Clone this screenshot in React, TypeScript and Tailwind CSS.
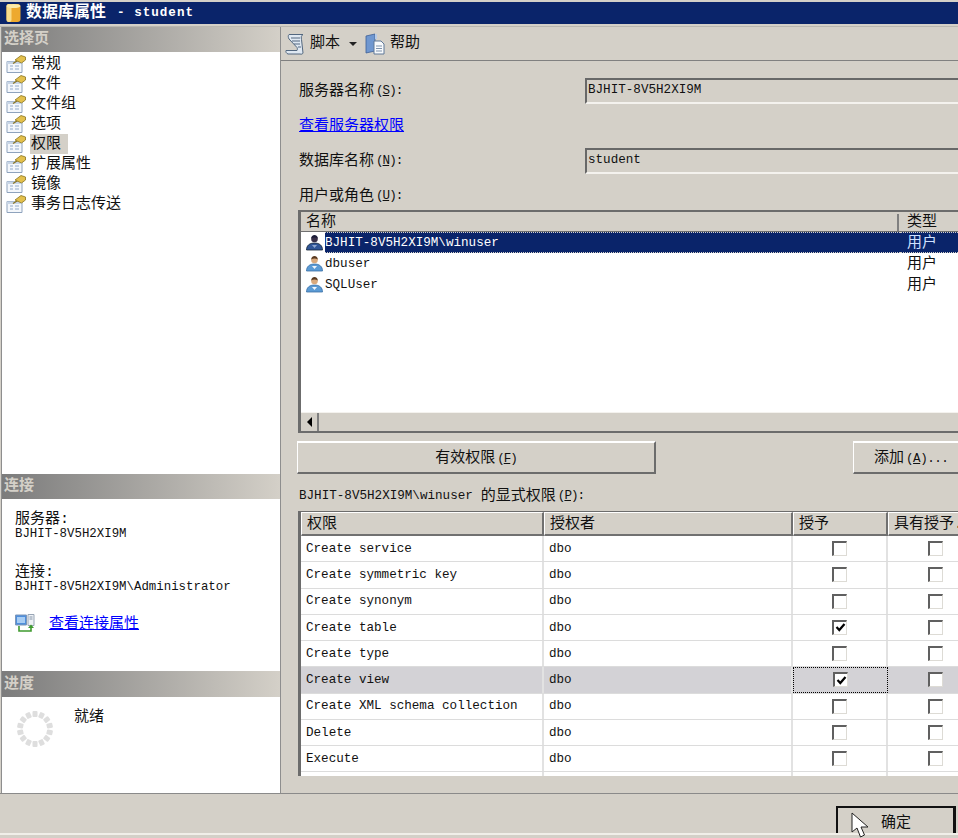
const LEFT_PAGES = ["常规", "文件", "文件组", "选项", "权限", "扩展属性", "镜像", "事务日志传送"];

const USERS = [
  { name: "BJHIT-8V5H2XI9M\\winuser", selected: true },
  { name: "dbuser", selected: false },
  { name: "SQLUser", selected: false },
];

const PERMISSIONS = [
  { name: "Create service", grant: false },
  { name: "Create symmetric key", grant: false },
  { name: "Create synonym", grant: false },
  { name: "Create table", grant: true },
  { name: "Create type", grant: false },
  { name: "Create view", grant: true, selected: true },
  { name: "Create XML schema collection", grant: false },
  { name: "Delete", grant: false },
  { name: "Execute", grant: false },
];

function PageIcon() {
  return (
    <svg width="20" height="20" viewBox="0 0 20 20" className="shrink-0">
      <path d="M1 7.500h15v11H1z" fill="#f4f7fb" stroke="#8fa3bd" />
      <path d="M1 7.500h15v2.500H1z" fill="#c9d6e6" />
      <path d="M4 12h3M9 12h4M4 15h3M9 15h4" stroke="#8fa9c9" strokeWidth="1.200" />
      <path d="M9 6l6-4.500 4.500 1.500v3l-4 3z" fill="#e3c04d" stroke="#8a7420" strokeWidth="0.800" />
      <path d="M7 9.500l4-2.500" stroke="#8a7420" strokeWidth="1.200" />
    </svg>
  );
}

function UserIcon({ selected }: { selected: boolean }) {
  return (
    <svg width="17" height="17" viewBox="0 0 17 17" className="shrink-0">
      <path
        d="M0.500 16c0-4.500 3-7 8-7s8 2.500 8 7z"
        fill={selected ? "#2f5597" : "#5b9bd5"}
        stroke={selected ? "#112233" : "#3a6ea5"}
        strokeWidth="0.800"
      />
      <path d="M6 11l2.500 3 2.500-3z" fill={selected ? "#8fa8d0" : "#f2f6fb"} />
      <circle cx="8.500" cy="5" r="3.300" fill={selected ? "#3a3048" : "#d9a97c"} />
      <path d="M5.200 4.500c.4-2.700 1.700-3.500 3.300-3.500s2.900.8 3.300 3.500c-1.800-1.300-4.800-1.300-6.600 0z" fill={selected ? "#1c1c38" : "#5a3a20"} />
    </svg>
  );
}

function ScriptIcon() {
  return (
    <svg width="20" height="22" viewBox="0 0 20 22">
      <path d="M4 1.500h14c-2 1-2 3-1.500 5L18 20c-.3 1-1.500 1.500-3 1H3c-1.500-.5-2.500-2-2-3.500h11c.5-1 .5-2 0-3L4 6C3 4 3 2.500 4 1.500z" fill="#dfe8f2" stroke="#52677f" strokeWidth="1" />
      <path d="M6 5h9M7 8h8M9 11h6M13 14h3" stroke="#52677f" strokeWidth="1" />
    </svg>
  );
}

function HelpIcon() {
  return (
    <svg width="20" height="22" viewBox="0 0 20 22">
      <path d="M1 3l9-2v17l-9 2z" fill="#6f97d0" stroke="#3d5f96" strokeWidth="0.800" />
      <path d="M10 1h2v5h-2z" fill="#b8cbe6" />
      <path d="M9 8h7l3 3v10H9z" fill="#f8fafc" stroke="#5f7898" strokeWidth="1" />
      <path d="M11 13h6M11 15.500h6M11 18h6" stroke="#7f93ad" strokeWidth="1" />
    </svg>
  );
}

function ConnectionIcon() {
  return (
    <svg width="20" height="20" viewBox="0 0 20 20" className="shrink-0">
      <path d="M0.500 1h11v10h-11z" fill="#4f8fdc" stroke="#7d96b8" />
      <path d="M2 3h8v6H2z" fill="#a8cdf4" />
      <path d="M13 0.500h6v11h-6z" fill="#eef1f5" stroke="#98a5b5" />
      <path d="M14.500 3h3M14.500 5h3" stroke="#8595a8" />
      <path d="M4 12v5h12v-4" fill="none" stroke="#3f9a2f" strokeWidth="1.600" />
      <path d="M13 14l3-3.500 3 3.500z" fill="#3f9a2f" />
    </svg>
  );
}

function Spinner() {
  const blocks = Array.from({ length: 14 }, (_, i) => (i * 360) / 14);
  return (
    <svg width="38" height="38" viewBox="0 0 38 38" className="shrink-0">
      {blocks.map((angle) => (
        <rect key={angle} x="16.500" y="1" width="5" height="6" rx="1" fill="#dedede" transform={`rotate(${angle} 19 19)`} />
      ))}
    </svg>
  );
}

function SectionHeader({ title, height }: { title: string; height: string }) {
  return (
    <div className={`flex items-center pl-[2px] font-bold text-[15px] text-[#d4d0c8] bg-gradient-to-r from-[#7c7c7c] to-[#d4d0c8] ${height}`}>
      {title}
    </div>
  );
}

function Mnemonic({ letter, colon = true }: { letter: string; colon?: boolean }) {
  return (
    <span className="ml-[2px] text-[12.600px] tracking-[-1px]">
      (<u>{letter}</u>){colon ? ":" : ""}
    </span>
  );
}

function Checkbox({ checked }: { checked: boolean }) {
  return (
    <span className="flex h-[15px] w-[15px] items-center justify-center border-2 border-r border-b border-t-[#606060] border-l-[#606060] border-r-[#dddbd5] border-b-[#dddbd5] bg-white">
      {checked && (
        <svg width="11" height="11" viewBox="0 0 11 11">
          <path d="M1.500 5l2.800 3L9.500 2" fill="none" stroke="#000" strokeWidth="2.200" />
        </svg>
      )}
    </span>
  );
}

function HeaderCell({ label, width }: { label: string; width: string }) {
  return (
    <div className={`flex shrink-0 items-center overflow-hidden whitespace-nowrap border-t border-l border-t-white border-l-white border-r-2 border-b-2 border-r-[#707070] border-b-[#707070] pl-[5px] pt-px bg-[#d4d0c8] ${width}`}>
      {label}
    </div>
  );
}

function PermissionRow({ name, grant, selected }: { name: string; grant: boolean; selected?: boolean }) {
  return (
    <div className={`flex h-[26.250px] shrink-0 border-b border-[#dcdcdc] text-[12.600px] ${selected ? "bg-[#d3d2d6]" : "bg-white"}`}>
      <div className="flex w-[243px] shrink-0 items-center whitespace-nowrap border-r-2 border-[#e2e2e2] pl-[5px] pt-px">{name}</div>
      <div className="flex w-[249px] shrink-0 items-center border-r-2 border-[#e2e2e2] pl-[5px] pt-px">dbo</div>
      <div className={`flex w-[95px] shrink-0 items-center justify-center ${selected ? "border border-dotted border-black" : "border-r-2 border-[#e2e2e2]"}`}>
        <Checkbox checked={grant} />
      </div>
      <div className="flex w-[95px] shrink-0 items-center justify-center">
        <Checkbox checked={false} />
      </div>
    </div>
  );
}

function Field({ value }: { value: string }) {
  return (
    <div className="ml-[304px] flex h-[26px] w-[400px] items-center border-2 border-r-0 border-t-[#686868] border-l-[#686868] border-b-[#f4f2ee] pb-[2px] pl-[1px] text-[12.600px]">
      {value}
    </div>
  );
}

export default function App() {
  return (
    <div className="relative flex h-[838px] w-[958px] flex-col overflow-hidden bg-[#d4d0c8] font-['Liberation_Mono','Noto_Sans_CJK_SC',monospace] text-[15px] leading-none text-[#111]">
      {/* title bar */}
      <div className="mt-[2px] flex h-[22px] items-center bg-[#0a246a] pl-[6px] text-[16px] font-bold text-white">
        <svg width="15" height="20" viewBox="0 0 15 20" className="mr-[5px]">
          <rect x="0.500" y="1" width="14" height="18" rx="3" fill="#eda92f" />
          <rect x="0.500" y="1" width="5" height="18" rx="2" fill="#f9dc8a" />
          <ellipse cx="7.500" cy="3" rx="7" ry="2" fill="#fbe9a8" />
        </svg>
        数据库属性
        <span className="ml-[11px] text-[12.600px] tracking-[1px]">- student</span>
      </div>

      <div className="mt-[2px] flex h-[767px] border-t border-[#b9b7b0]">
        {/* left panel */}
        <div className="ml-px flex w-[280px] shrink-0 flex-col border-x border-[#8e8e8e] bg-white">
          <SectionHeader title="选择页" height="h-[25px]" />
          <div className="h-[422px] pt-[2px] pl-[4px]">
            {LEFT_PAGES.map((page) => (
              <div key={page} className="flex h-[20px] items-center">
                <PageIcon />
                <span className={`ml-[4px] flex h-[20px] items-center px-[1px] ${page === "权限" ? "w-[38px] bg-[#d4d0c8]" : ""}`}>{page}</span>
              </div>
            ))}
          </div>
          <SectionHeader title="连接" height="h-[25px]" />
          <div className="h-[172px] pl-[13px] pt-[13px]">
            <div className="h-[16px]">服务器:</div>
            <div className="h-[37px] text-[12.400px]">BJHIT-8V5H2XI9M</div>
            <div className="h-[16px]">连接:</div>
            <div className="h-[33px] text-[12.400px]">BJHIT-8V5H2XI9M\Administrator</div>
            <div className="flex items-center">
              <ConnectionIcon />
              <a className="ml-[14px] text-[#0000ff] underline">查看连接属性</a>
            </div>
          </div>
          <SectionHeader title="进度" height="h-[26px]" />
          <div className="flex flex-1 pl-[14px] pt-[13px]">
            <Spinner />
            <span className="ml-[20px]">就绪</span>
          </div>
        </div>

        {/* right panel */}
        <div className="flex min-w-0 flex-1 flex-col">
          <div className="flex h-[34px] shrink-0 items-center border-b border-[#808080] pl-[4px]">
            <ScriptIcon />
            <span className="ml-[5px]">脚本</span>
            <span className="ml-[9px] h-0 w-0 border-x-[4px] border-t-[4px] border-x-transparent border-t-[#222]" />
            <span className="ml-[8px]"><HelpIcon /></span>
            <span className="ml-[5px]">帮助</span>
          </div>

          <div className="relative flex flex-col pt-[17px]">
            <div className="relative">
              <span className="absolute left-[18px] top-[5px] flex h-[16px] items-center whitespace-nowrap">服务器名称<Mnemonic letter="S" /></span>
              <Field value="BJHIT-8V5H2XI9M" />
            </div>
            <a className="ml-[18px] mt-[10px] flex h-[22px] items-center pt-[2px] text-[#0000ff] underline">查看服务器权限</a>
            <div className="relative mt-[12px]">
              <span className="absolute left-[18px] top-[5px] flex h-[16px] items-center whitespace-nowrap">数据库名称<Mnemonic letter="N" /></span>
              <Field value="student" />
            </div>
            <div className="ml-[18px] mt-[10px] flex h-[22px] items-center pt-[2px]">用户或角色<Mnemonic letter="U" /></div>

            {/* users list */}
            <div className="ml-[17px] mt-[4px] flex h-[223px] w-[680px] shrink-0 flex-col border-t-2 border-b-2 border-l-[3px] border-[#6c6c6c] bg-white">
              <div className="flex h-[20px] shrink-0 border-b border-[#707070] bg-[#d4d0c8] pt-[2px]">
                <div className="flex w-[598px] items-center border-r-2 border-[#808080] pl-[5px]">名称</div>
                <div className="flex flex-1 items-center pl-[8px]">类型</div>
              </div>
              <div className="flex-1">
                {USERS.map((user) => (
                  <div key={user.name} className="flex h-[21px] items-center pl-[5px]">
                    <UserIcon selected={user.selected} />
                    <div className={`ml-[2px] flex h-full w-[575px] items-center pt-px text-[12.600px] ${user.selected ? "border-y border-dotted border-[#d4d0c8] bg-[#0a246a] text-white" : ""}`}>
                      {user.name}
                    </div>
                    <div className={`flex h-full flex-1 items-center pl-[7px] pt-px ${user.selected ? "border-y border-dotted border-[#d4d0c8] bg-[#0a246a] text-[#cfe0ff]" : ""}`}>
                      用户
                    </div>
                  </div>
                ))}
              </div>
              <div className="flex h-[19px] shrink-0 border-t border-[#f4f2ee] bg-[#d4d0c8]">
                <div className="flex w-[18px] items-center justify-center border-r-2 border-[#808080]">
                  <span className="h-0 w-0 border-y-[5px] border-r-[5px] border-y-transparent border-r-black" />
                </div>
              </div>
            </div>

            <div className="mt-[8px] flex h-[33px] shrink-0">
              <button className="ml-[16px] h-full w-[359px] shrink-0 border-t-2 border-l border-t-white border-l-white border-r-2 border-b-2 border-r-[#6c6c6c] border-b-[#6c6c6c] pt-[2px] text-center bg-[#d4d0c8]">
                有效权限<Mnemonic letter="F" colon={false} />
              </button>
              <button className="ml-[197px] h-full w-[120px] shrink-0 border-t-2 border-l border-t-white border-l-white border-b-2 border-b-[#6c6c6c] pl-[20px] pt-[2px] text-left bg-[#d4d0c8]">
                添加
                <span className="ml-[2px] text-[12.600px] tracking-[-0.500px]">(<u>A</u>)...</span>
              </button>
            </div>

            <div className="ml-[18px] mt-[10px] flex h-[22px] items-center whitespace-nowrap pt-[2px]">
              <span className="mr-[8px] text-[12.600px]">BJHIT-8V5H2XI9M\winuser</span>的显式权限<Mnemonic letter="P" />
            </div>

            {/* permissions table */}
            <div className="ml-[17px] mt-[5px] flex h-[265px] w-[685px] shrink-0 flex-col overflow-hidden border-t border-l-[3px] border-[#6c6c6c] bg-white">
              <div className="flex h-[24px] shrink-0">
                <HeaderCell label="权限" width="w-[243px]" />
                <HeaderCell label="授权者" width="w-[249px]" />
                <HeaderCell label="授予" width="w-[95px]" />
                <HeaderCell label="具有授予..." width="w-[95px]" />
              </div>
              {PERMISSIONS.map((row) => (
                <PermissionRow key={row.name} {...row} />
              ))}
              <div className="flex flex-1">
                <div className="w-[243px] border-r-2 border-[#e2e2e2]" />
                <div className="w-[249px] border-r-2 border-[#e2e2e2]" />
                <div className="w-[95px] border-r-2 border-[#e2e2e2]" />
              </div>
            </div>
          </div>
        </div>
      </div>

      {/* footer */}
      <div className="flex h-[45px] shrink-0 flex-col border-t border-[#8a8a8a]">
        <div className="flex flex-1 items-end justify-end pr-[2px]">
          <div className="flex h-[27px] w-[120px] items-center border-t-2 border-l-2 border-r-[3px] border-[#111] pl-[43px] pt-[6px]">确定</div>
        </div>
        <div className="h-[5px] border-t-2 border-[#f1efe9]" />
      </div>

      {/* mouse cursor */}
      <svg width="20" height="28" viewBox="0 0 20 28" className="absolute left-[851px] top-[812px]">
        <path d="M1 1v19l5-4 3.500 9 4-2-3.500-8h7z" fill="#fff" stroke="#222" strokeWidth="1" />
      </svg>
    </div>
  );
}
